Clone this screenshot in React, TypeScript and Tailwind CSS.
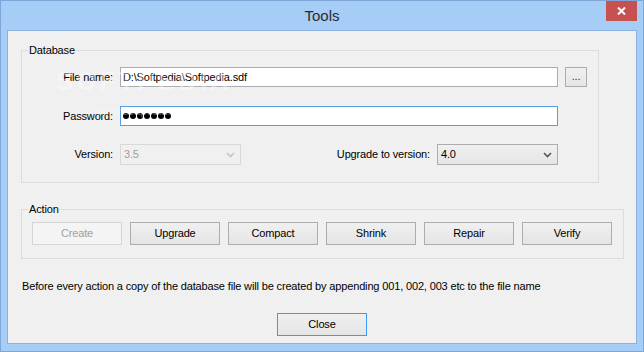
const font = "font-['Liberation_Sans',Arial,sans-serif]";

function Chevron({ color }: { color: string }) {
  return (
    <svg width="9" height="6" viewBox="0 0 9 6">
      <path d="M1 1 L4.5 4.5 L8 1" fill="none" stroke={color} strokeWidth="1.6" />
    </svg>
  );
}

function Button({
  label,
  disabled,
  def,
  className = "",
}: {
  label: string;
  disabled?: boolean;
  def?: boolean;
  className?: string;
}) {
  const look = disabled
    ? "border-[#d5d5d5] bg-[#f4f4f4] text-[#a0a0a0]"
    : def
      ? "border-[#3c99fc] bg-gradient-to-b from-[#f0f0f0] to-[#e5e5e5] text-black"
      : "border-[#acacac] bg-gradient-to-b from-[#f0f0f0] to-[#e5e5e5] text-black";
  return (
    <div
      className={`w-[90px] h-[23px] border flex items-center justify-center shrink-0 ${look} ${className}`}
    >
      {label}
    </div>
  );
}

function Group({
  title,
  className,
  children,
}: {
  title: string;
  className: string;
  children: React.ReactNode;
}) {
  return (
    <div className={`relative border border-[#dcdcdc] ${className}`}>
      <span className="absolute -top-[8px] left-[6px] bg-[#f0f0f0] px-[1px] leading-[14px]">
        {title}
      </span>
      {children}
    </div>
  );
}

export default function App() {
  return (
    <div
      className={`${font} text-[11px] tracking-[-0.15px] text-black w-[644px] h-[352px] bg-[#a5cdf6] border border-[#7fa6d8] flex flex-col`}
    >
      {/* title bar */}
      <div className="relative h-[29px] flex items-center justify-center shrink-0">
        <span className="text-[15px] tracking-normal text-[#2b2b2b] pt-[1px]">Tools</span>
        <div className="absolute top-0 right-[6px] w-[31px] h-[20px] bg-[#c75050] flex items-center justify-center">
          <svg width="9" height="8" viewBox="0 0 9 8">
            <path d="M1 0.5 L8 7.5 M8 0.5 L1 7.5" stroke="white" strokeWidth="2" />
          </svg>
        </div>
      </div>

      {/* client area */}
      <div className="relative mx-[6px] w-[630px] h-[314px] bg-[#f0f0f0] border border-[#8cb1df] flex flex-col">
        <Group title="Database" className="ml-[13px] mt-[19px] w-[578px] h-[133px] pt-[16px]">
          <div className="flex items-center h-[20px]">
            <div className="w-[91px] text-right">File name:</div>
            <div className="ml-[7px] w-[438px] h-[20px] bg-white border border-[#abadb3] flex items-center pl-[2px]">
              D:\Softpedia\Softpedia.sdf
            </div>
            <div className="ml-[7px] w-[22px] h-[20px] border border-[#acacac] bg-gradient-to-b from-[#f0f0f0] to-[#e5e5e5] flex items-center justify-center pb-[2px] text-[#3a1f6b]">
              ...
            </div>
          </div>

          <div className="flex items-center h-[20px] mt-[19px]">
            <div className="w-[91px] text-right">Password:</div>
            <div className="ml-[7px] w-[438px] h-[20px] bg-white border border-[#569de5] flex items-center gap-[1px] pl-[2px]">
              {Array.from({ length: 7 }).map((_, i) => (
                <span key={i} className="w-[6px] h-[6px] rounded-full bg-black" />
              ))}
            </div>
          </div>

          <div className="flex items-center h-[21px] mt-[18px]">
            <div className="w-[91px] text-right">Version:</div>
            <div className="ml-[7px] w-[121px] h-[21px] bg-[#f0f0f0] border border-[#d9d9d9] flex items-center justify-between pl-[3px] pr-[5px] text-[#a0a0a0]">
              <span>3.5</span>
              <Chevron color="#c4c4c4" />
            </div>
            <div className="w-[189px] text-right">Upgrade to version:</div>
            <div className="ml-[7px] w-[121px] h-[21px] bg-gradient-to-b from-[#f0f0f0] to-[#e5e5e5] border border-[#acacac] flex items-center justify-between pl-[3px] pr-[5px]">
              <span>4.0</span>
              <Chevron color="#555555" />
            </div>
          </div>
        </Group>

        <Group title="Action" className="ml-[13px] mt-[26px] w-[603px] h-[50px] pt-[12px] pl-[10px]">
          <div className="flex gap-[8px]">
            <Button label="Create" disabled />
            <Button label="Upgrade" />
            <Button label="Compact" />
            <Button label="Shrink" />
            <Button label="Repair" />
            <Button label="Verify" />
          </div>
        </Group>

        <p className="ml-[14px] mt-[21px] leading-[13px]">
          Before every action a copy of the database file will be created by appending 001, 002, 003 etc to the file name
        </p>

        <div className="mt-[20px] flex justify-center">
          <Button label="Close" def />
        </div>

        {/* watermark */}
        <div className="absolute left-[48px] top-[36px] flex flex-col items-center pointer-events-none text-white/40 tracking-normal">
          <span className="text-[26px] font-bold tracking-[3px] leading-[28px]">SOFTPEDIA</span>
          <span className="text-[11px] leading-[12px] mt-[10px]">www.softpedia.com</span>
        </div>
      </div>
    </div>
  );
}
